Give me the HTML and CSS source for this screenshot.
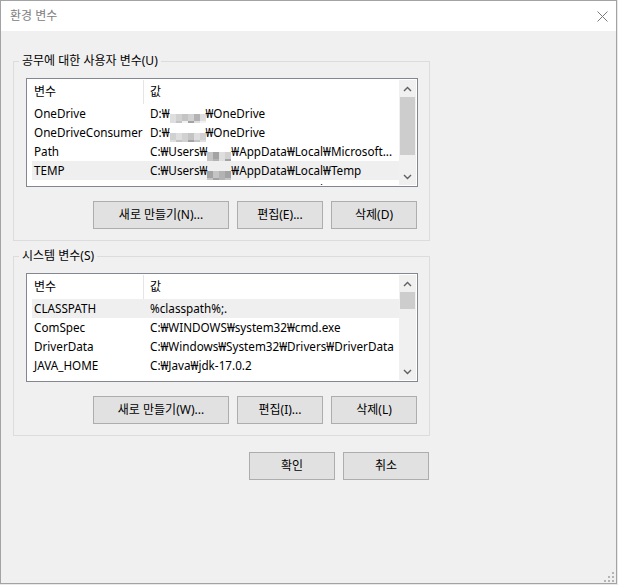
FILE: index.html
```html
<!DOCTYPE html>
<html lang="ko">
<head>
<meta charset="utf-8">
<title>환경 변수</title>
<link rel="stylesheet" href="styles.css">
</head>
<body>
<div class="window">
  <div class="titlebar">
    <span class="title">환경 변수</span>
    <svg class="close" width="11" height="11" viewBox="0 0 11 11"><path d="M0.5 0.5 L10.5 10.5 M10.5 0.5 L0.5 10.5" stroke="#7a7a7a" stroke-width="1" fill="none"/></svg>
  </div>
  <div class="content">
    <section class="group">
      <div class="group-label">공무에 대한 사용자 변수(U)</div>
      <div class="listbox">
        <div class="list-main">
          <div class="list-header"><div class="hcell name">변수</div><div class="hcell value">값</div></div>
          <div class="row"><div class="cell name">OneDrive</div><div class="cell value">D:₩<span class="blur"><i class="b1"></i><i class="b4"></i><i class="b2"></i><i class="b4"></i><i class="b5"></i><i class="b1"></i><i class="b1"></i><i class="b2"></i><i class="b0"></i><i class="b3"></i><i class="b1"></i><i class="b0"></i></span>₩OneDrive</div></div>
          <div class="row"><div class="cell name">OneDriveConsumer</div><div class="cell value">D:₩<span class="blur"><i class="b4"></i><i class="b1"></i><i class="b4"></i><i class="b2"></i><i class="b1"></i><i class="b4"></i><i class="b1"></i><i class="b2"></i><i class="b4"></i><i class="b3"></i><i class="b2"></i><i class="b1"></i></span>₩OneDrive</div></div>
          <div class="row"><div class="cell name">Path</div><div class="cell value">C:₩Users₩<span class="blur short"><i class="b2"></i><i class="b3"></i><i class="b1"></i><i class="b4"></i><i class="b2"></i><i class="b5"></i><i class="b1"></i><i class="b3"></i></span>₩AppData₩Local₩Microsoft...</div></div>
          <div class="row selected"><div class="cell name">TEMP</div><div class="cell value">C:₩Users₩<span class="blur short"><i class="b3"></i><i class="b2"></i><i class="b5"></i><i class="b3"></i><i class="b2"></i><i class="b3"></i><i class="b5"></i><i class="b2"></i></span>₩AppData₩Local₩Temp</div></div>
          <div class="row"><div class="cell name">TMP</div><div class="cell value">C:₩Users₩<span class="blur short"><i class="b3"></i><i class="b2"></i><i class="b5"></i><i class="b3"></i><i class="b2"></i><i class="b3"></i><i class="b5"></i><i class="b2"></i></span>₩AppData₩Local₩Temp</div></div>
        </div>
        <div class="scrollbar">
          <div class="sb-btn"><svg width="9" height="6" viewBox="0 0 9 6"><polyline points="1,5 4.5,1.5 8,5" fill="none" stroke="#606060" stroke-width="1.4"/></svg></div>
          <div class="sb-track"><div class="sb-thumb thumb-user"></div></div>
          <div class="sb-btn"><svg width="9" height="6" viewBox="0 0 9 6"><polyline points="1,1 4.5,4.5 8,1" fill="none" stroke="#606060" stroke-width="1.4"/></svg></div>
        </div>
      </div>
      <div class="btn-row">
        <button class="btn wide">새로 만들기(N)...</button>
        <button class="btn">편집(E)...</button>
        <button class="btn">삭제(D)</button>
      </div>
    </section>

    <section class="group system">
      <div class="group-label">시스템 변수(S)</div>
      <div class="listbox">
        <div class="list-main">
          <div class="list-header"><div class="hcell name">변수</div><div class="hcell value">값</div></div>
          <div class="row selected"><div class="cell name">CLASSPATH</div><div class="cell value">%classpath%;.</div></div>
          <div class="row"><div class="cell name">ComSpec</div><div class="cell value">C:₩WINDOWS₩system32₩cmd.exe</div></div>
          <div class="row"><div class="cell name">DriverData</div><div class="cell value">C:₩Windows₩System32₩Drivers₩DriverData</div></div>
          <div class="row"><div class="cell name">JAVA_HOME</div><div class="cell value">C:₩Java₩jdk-17.0.2</div></div>
        </div>
        <div class="scrollbar">
          <div class="sb-btn"><svg width="9" height="6" viewBox="0 0 9 6"><polyline points="1,5 4.5,1.5 8,5" fill="none" stroke="#606060" stroke-width="1.4"/></svg></div>
          <div class="sb-track"><div class="sb-thumb thumb-system"></div></div>
          <div class="sb-btn"><svg width="9" height="6" viewBox="0 0 9 6"><polyline points="1,1 4.5,4.5 8,1" fill="none" stroke="#606060" stroke-width="1.4"/></svg></div>
        </div>
      </div>
      <div class="btn-row">
        <button class="btn wide">새로 만들기(W)...</button>
        <button class="btn">편집(I)...</button>
        <button class="btn">삭제(L)</button>
      </div>
    </section>

    <div class="btn-row dialog-btns">
      <button class="btn">확인</button>
      <button class="btn">취소</button>
    </div>
  </div>
  <svg class="grip" width="10" height="10" viewBox="0 0 10 10" fill="#b4b4b4">
    <rect x="8" y="0" width="2" height="2"/>
    <rect x="4" y="4" width="2" height="2"/><rect x="8" y="4" width="2" height="2"/>
    <rect x="0" y="8" width="2" height="2"/><rect x="4" y="8" width="2" height="2"/><rect x="8" y="8" width="2" height="2"/>
  </svg>
</div>
</body>
</html>
```

FILE: styles.css
```css
* { box-sizing: border-box; }

html, body {
  margin: 0;
  padding: 0;
  background: #e9e9e9;
}

body {
  font-family: "Noto Sans", "Noto Sans CJK KR", sans-serif;
  font-size: 12px;
  color: #000;
}

.window {
  position: relative;
  width: 617px;
  height: 584px;
  border: 1px solid #a3a3a3;
  background: #f0f0f0;
}

.titlebar {
  height: 30px;
  background: #fff;
  display: flex;
  align-items: center;
  justify-content: space-between;
  padding: 0 8px 0 9px;
}

.title {
  color: #808080;
  font-size: 12px;
  line-height: 30px;
}

.close { display: block; }

.content {
  padding: 30px 0 0 12px;
}

.group {
  width: 417px;
  border: 1px solid #dcdcdc;
  padding: 0 11px 11px 12px;
}

.group.system {
  margin-top: 15px;
}

.group-label {
  width: max-content;
  margin: -9px 0 9px -7px;
  padding: 0 3px;
  line-height: 16px;
  background: #f0f0f0;
}

.listbox {
  width: 392px;
  height: 109px;
  border: 1px solid #828790;
  background: #fff;
  padding: 1px;
  display: flex;
}

.list-main {
  flex: 1;
  min-width: 0;
  padding-left: 4px;
  overflow: hidden;
}

.list-header {
  display: flex;
  height: 24px;
  line-height: 24px;
}

.hcell.name {
  width: 112px;
  padding-left: 2px;
  border-right: 1px solid #e5e5e5;
}

.hcell.value {
  padding-left: 6px;
}

.row {
  display: grid;
  grid-template-columns: 118px 1fr;
  height: 19px;
  line-height: 19px;
  font-size: 11.7px;
  white-space: nowrap;
}

.row.selected {
  background: #efefef;
}

.cell.name {
  padding-left: 2px;
  overflow: hidden;
}

.cell.value {
  overflow: hidden;
}

.blur {
  display: inline-grid;
  grid-template-columns: repeat(6, 6px);
  grid-auto-rows: 7px;
  vertical-align: -3px;
}

.blur.short {
  grid-template-columns: repeat(4, 6px);
}

.blur i { display: block; }
.b0 { background: #f2f2f2; }
.b1 { background: #dedede; }
.b2 { background: #c4c4c4; }
.b3 { background: #a3a3a3; }
.b4 { background: #d1d1d1; }
.b5 { background: #b3b3b3; }

.scrollbar {
  width: 17px;
  background: #f0f0f0;
  display: flex;
  flex-direction: column;
  padding: 0 1px;
}

.sb-btn {
  height: 17px;
  display: flex;
  align-items: center;
  justify-content: center;
}

.sb-track {
  flex: 1;
}

.sb-thumb {
  background: #cdcdcd;
}

.thumb-user { height: 58px; }
.thumb-system { height: 17px; }

.btn-row {
  display: flex;
  justify-content: flex-end;
  gap: 8px;
  margin-top: 14px;
  margin-right: 1px;
}

.btn {
  width: 86px;
  height: 28px;
  border: 1px solid #adadad;
  background: #e1e1e1;
  font-family: inherit;
  font-size: 12px;
  color: #000;
  padding: 0;
  line-height: 26px;
}

.btn.wide { width: 136px; }

.dialog-btns {
  width: 417px;
  margin-top: 16px;
  padding-right: 1px;
  margin-right: 0;
}

.grip {
  position: absolute;
  right: 2px;
  bottom: 1px;
}
```
